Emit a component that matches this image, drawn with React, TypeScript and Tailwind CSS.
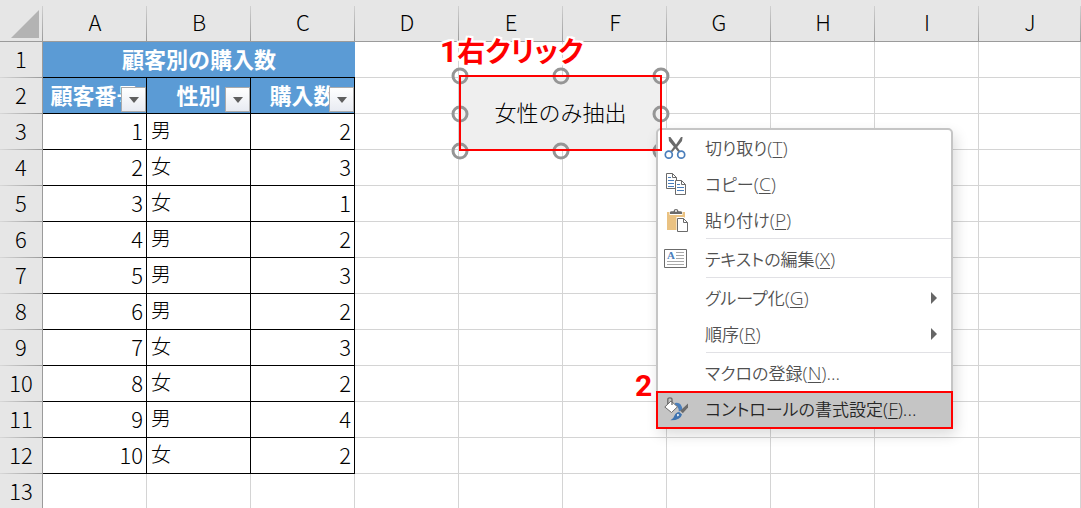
import type { ReactNode } from 'react';

const columns = ['A', 'B', 'C', 'D', 'E', 'F', 'G', 'H', 'I', 'J'];
const emptyColumns = ['D', 'E', 'F', 'G', 'H', 'I', 'J'];
const filterHeaders = ['顧客番号', '性別', '購入数'];

const customers = [
  { id: 1, gender: '男', count: 2 },
  { id: 2, gender: '女', count: 3 },
  { id: 3, gender: '女', count: 1 },
  { id: 4, gender: '男', count: 2 },
  { id: 5, gender: '男', count: 3 },
  { id: 6, gender: '男', count: 2 },
  { id: 7, gender: '女', count: 3 },
  { id: 8, gender: '女', count: 2 },
  { id: 9, gender: '男', count: 4 },
  { id: 10, gender: '女', count: 2 },
];

const handles = [
  'left-0 top-0',
  'left-1/2 top-0',
  'left-full top-0',
  'left-0 top-1/2',
  'left-full top-1/2',
  'left-0 top-full',
  'left-1/2 top-full',
  'left-full top-full',
];

function CutIcon() {
  return (
    <svg viewBox="0 0 24 24" className="size-6" fill="none" aria-hidden="true">
      <path d="M4.6 1 L6.4 1 L12 8.6 L17 1 L18.6 1 L18 5 L13.2 11 L16.4 15.6 L14.2 16 L11.4 12.6 L8.4 16 L6.4 15.4 L9.8 10.8 L5 5 Z" fill="#6b6b6b" />
      <circle cx="4.8" cy="18.7" r="3.5" stroke="#4a7ebb" strokeWidth="1.7" />
      <circle cx="17.2" cy="18.7" r="3.5" stroke="#4a7ebb" strokeWidth="1.7" />
    </svg>
  );
}

function CopyIcon() {
  return (
    <svg viewBox="0 0 24 24" className="size-6" fill="none" aria-hidden="true">
      <path d="M2.5 1.5 H8.5 L12.5 5.5 V16.5 H2.5 Z" fill="#fff" stroke="#6b6b6b" />
      <path d="M8.5 1.5 V5.5 H12.5" stroke="#6b6b6b" />
      <path d="M4 5.5 H7 M4 8.5 H10 M4 11.5 H10 M4 14.5 H10" stroke="#4a7ebb" />
      <path d="M11.5 8.5 H17.5 L21.5 12.5 V22.5 H11.5 Z" fill="#fff" stroke="#6b6b6b" />
      <path d="M17.5 8.5 V12.5 H21.5" stroke="#6b6b6b" />
      <path d="M13 12.5 H16 M13 15.5 H20 M13 18.5 H20" stroke="#4a7ebb" />
    </svg>
  );
}

function PasteIcon() {
  return (
    <svg viewBox="0 0 24 24" className="size-6" fill="none" aria-hidden="true">
      <path d="M3 4 H21 V22 H3 Z" fill="#eac282" />
      <path d="M5.5 3 H18.5 V7 H5.5 Z" fill="#fff" />
      <path d="M6 6 V4.2 Q6 3.2 7.5 3.2 H9.5 Q9.8 1 12 1 Q14.2 1 14.5 3.2 H16.5 Q18 3.2 18 4.2 V6 Z" fill="#6b6b6b" />
      <circle cx="12" cy="3" r="0.9" fill="#fff" />
      <path d="M12.5 9 H20 L24 13 V24 H12.5 Z" fill="#fff" />
      <path d="M13.5 10.5 H19.5 L23.5 14.5 V23.5 H13.5 Z" fill="#fff" stroke="#6b6b6b" />
      <path d="M19.5 10.5 V14.5 H23.5" stroke="#6b6b6b" />
    </svg>
  );
}

function EditTextIcon() {
  return (
    <svg viewBox="0 0 24 24" className="size-6" fill="none" aria-hidden="true">
      <path d="M0.5 2.5 H22.5 V20.5 H0.5 Z" fill="#fff" stroke="#6b6b6b" />
      <text x="3" y="12" fill="#4a7ebb" className="font-['Liberation_Serif',serif] text-[11px] font-bold">A</text>
      <path d="M12 5.5 H20 M12 8.5 H20 M12 11.5 H20 M3 14.5 H20 M3 17.5 H20" stroke="#a8a8a8" />
    </svg>
  );
}

function FormatIcon() {
  return (
    <svg viewBox="0 0 24 24" className="size-6" fill="none" aria-hidden="true">
      <path d="M11 6 Q17.5 4.5 18.5 13 L14.8 14.5 Q15 9.5 11 8 Z" fill="#4a7ebb" />
      <path d="M7 4 L13.5 9.8 L7.5 15.5 L0.8 10 Z" fill="#fff" stroke="#6b6b6b" />
      <path d="M3.8 7 V2.5 Q3.8 0.8 5.8 0.8 Q8 0.8 8 2.5 V8" stroke="#6b6b6b" strokeWidth="1.3" />
      <path d="M24 6.5 V10.5 L18.8 16.2 L16.2 13.8 Z" fill="#6b6b6b" />
      <path d="M15.2 15 L18 17.5 Q16.5 23.5 6.5 23.3 Q9.8 21.5 10.5 18.5 Q12 15 15.2 15 Z" fill="#3f74b0" />
      <path d="M13.2 17 Q14.8 16.6 15.2 18.2 L13.2 19.6 Z" fill="#fff" />
    </svg>
  );
}

type MenuEntry = {
  label: string;
  accessKey: string;
  suffix?: string;
  icon?: ReactNode;
  submenu?: boolean;
  selected?: boolean;
};

const menuGroups: MenuEntry[][] = [
  [
    { label: '切り取り', accessKey: 'T', icon: <CutIcon /> },
    { label: 'コピー', accessKey: 'C', icon: <CopyIcon /> },
    { label: '貼り付け', accessKey: 'P', icon: <PasteIcon /> },
  ],
  [{ label: 'テキストの編集', accessKey: 'X', icon: <EditTextIcon /> }],
  [
    { label: 'グループ化', accessKey: 'G', submenu: true },
    { label: '順序', accessKey: 'R', submenu: true },
  ],
  [
    { label: 'マクロの登録', accessKey: 'N', suffix: '...' },
    { label: 'コントロールの書式設定', accessKey: 'F', suffix: '...', icon: <FormatIcon />, selected: true },
  ],
];

function MenuItem({ entry }: { entry: MenuEntry }) {
  return (
    <button
      type="button"
      role="menuitem"
      className={
        entry.selected
          ? 'mt-[2px] flex h-[34px] w-full items-center bg-[#c5c5c5] pr-[14px] pb-[2px] pl-[6px] text-left text-[#262626] outline-2 outline-[#ff0000]'
          : 'flex h-9 w-full items-center pr-[14px] pl-[6px] text-left text-[#505050]'
      }
    >
      <span className="mr-[17px] size-6 shrink-0">{entry.icon}</span>
      <span className="flex-1 whitespace-nowrap">
        {entry.label}
        <span className="text-[19px]">
          (<span className="underline underline-offset-2">{entry.accessKey}</span>){entry.suffix}
        </span>
      </span>
      {entry.submenu && (
        <svg viewBox="0 0 6 12" className="h-3 w-[6px]" aria-hidden="true">
          <path d="M0 0 L6 6 L0 12 Z" fill="#666" />
        </svg>
      )}
    </button>
  );
}

function ContextMenu() {
  return (
    <div
      role="menu"
      className="absolute top-32 left-[656px] w-[297px] rounded-[5px] border-2 border-[#c5c5c5] bg-white font-['Open_Sans','Noto_Sans_CJK_JP',sans-serif] text-[17px] leading-6 font-[350] shadow-[3px_6px_14px_rgba(0,0,0,0.14)] [font-feature-settings:'palt']"
    >
      {menuGroups.map((group, index) => (
        <div key={group[0].label} role="group">
          {index > 0 && <div role="separator" className="mb-[2px] ml-12 h-px bg-[#e1e1e5]" />}
          {group.map((entry) => (
            <MenuItem key={entry.label} entry={entry} />
          ))}
        </div>
      ))}
    </div>
  );
}

function RowHeader({ row }: { row: number }) {
  return (
    <th
      scope="row"
      className="h-9 border-r border-[#9b9b9b] bg-[#e6e6e6] bg-linear-to-r from-[#d8d8d8] to-[#9b9b9b] bg-[length:100%_1px] bg-bottom bg-no-repeat px-0 pt-0 pb-1 text-center font-light"
    >
      {row}
    </th>
  );
}

function EmptyCells() {
  return (
    <>
      {emptyColumns.map((column) => (
        <td key={column} className="border-r border-b border-[#d4d4d4]" />
      ))}
    </>
  );
}

function Sheet() {
  return (
    <table className="w-full table-fixed border-separate border-spacing-0 text-[22px] leading-7 font-light text-black">
      <colgroup>
        <col className="w-[43px]" />
        {columns.map((column) => (
          <col key={column} className={column === 'J' ? '' : 'w-[104px]'} />
        ))}
      </colgroup>
      <thead>
        <tr>
          <td className="h-[42px] border-b border-[#9b9b9b] bg-[#e6e6e6] bg-linear-to-b from-[#d0d0d0] to-[#9b9b9b] bg-[length:1px_35px] bg-right-bottom bg-no-repeat p-0">
            <svg viewBox="0 0 28 28" className="mt-[7px] ml-[11px] size-7" aria-hidden="true">
              <path d="M28 0 V28 H0 Z" fill="#b3b3b3" />
            </svg>
          </td>
          {columns.map((column) => (
            <th
              key={column}
              scope="col"
              className="border-b border-[#9b9b9b] bg-[#e6e6e6] bg-linear-to-b from-[#d0d0d0] to-[#9b9b9b] bg-[length:1px_35px] bg-right-bottom bg-no-repeat p-0 text-center font-light"
            >
              {column}
            </th>
          ))}
        </tr>
      </thead>
      <tbody>
        <tr>
          <RowHeader row={1} />
          <th colSpan={3} className="border-b border-black bg-[#5b9bd5] px-0 pt-0 pb-1 text-center font-bold text-white">
            顧客別の購入数
          </th>
          <EmptyCells />
        </tr>
        <tr>
          <RowHeader row={2} />
          {filterHeaders.map((header) => (
            <th key={header} scope="col" className="relative border-r border-b border-black bg-[#5b9bd5] px-0 pt-0 pb-1 text-center font-bold text-white">
              {header}
              <button
                type="button"
                aria-label={`${header}のフィルター`}
                className="absolute right-0 bottom-px flex size-[25px] items-center justify-center border border-[#ababab] bg-linear-to-b from-white to-[#e8ebf2]"
              >
                <svg viewBox="0 0 10 6" className="h-[6px] w-[10px]" aria-hidden="true">
                  <path d="M0 0 H10 L5 6 Z" fill="#5f5f5f" />
                </svg>
              </button>
            </th>
          ))}
          <EmptyCells />
        </tr>
        {customers.map((customer) => (
          <tr key={customer.id}>
            <RowHeader row={customer.id + 2} />
            <td className="border-r border-b border-black pt-0 pr-[3px] pb-1 pl-0 text-right">{customer.id}</td>
            <td className="border-r border-b border-black pt-0 pr-0 pb-1 pl-1 text-[20px]">{customer.gender}</td>
            <td className="border-r border-b border-black pt-0 pr-[3px] pb-1 pl-0 text-right">{customer.count}</td>
            <EmptyCells />
          </tr>
        ))}
        <tr>
          <RowHeader row={13} />
          {columns.map((column) => (
            <td key={column} className="border-r border-b border-[#d4d4d4]" />
          ))}
        </tr>
      </tbody>
    </table>
  );
}

export default function App() {
  return (
    <main className="relative h-screen overflow-hidden bg-white font-['Noto_Sans_CJK_JP',sans-serif]">
      <Sheet />

      {/* Form control with its selection handles */}
      <div className="absolute top-[76px] left-[460px] h-[75px] w-[201px]">
        <button type="button" className="size-full bg-[#efefef] pb-1 text-[22px] font-light text-black">
          女性のみ抽出
        </button>
        {handles.map((position) => (
          <span
            key={position}
            className={`absolute size-[17px] -translate-1/2 rounded-full border-[3px] border-[#959595] ${position}`}
          />
        ))}
      </div>

      <ContextMenu />

      {/* Step annotations */}
      <div className="pointer-events-none absolute top-[75px] left-[459px] h-[76px] w-[203px] border-2 border-[#ff0000]" />
      <p className="absolute top-9 left-[440px] flex items-baseline font-['Roboto','Noto_Sans_CJK_JP',sans-serif] text-[30px] leading-8 font-bold whitespace-nowrap text-[#ff0000] [font-feature-settings:'palt'] [text-shadow:2px_0_#fff,-2px_0_#fff,0_2px_#fff,0_-2px_#fff,2px_2px_#fff,-2px_-2px_#fff,2px_-2px_#fff,-2px_2px_#fff]">
        1<span className="text-[28px]">右クリック</span>
      </p>
      <p className="absolute top-[370px] left-[635px] font-['Roboto',sans-serif] text-[30px] leading-8 font-bold text-[#ff0000] [text-shadow:2px_0_#fff,-2px_0_#fff,0_2px_#fff,0_-2px_#fff]">
        2
      </p>
    </main>
  );
}
